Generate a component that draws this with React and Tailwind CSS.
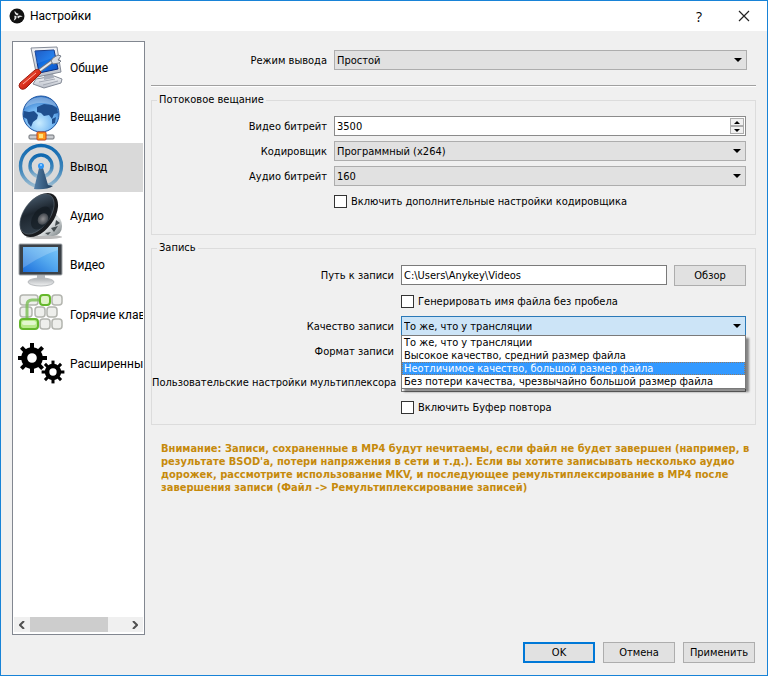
import React, { useState } from "react";

const GeneralIcon = () => (
  <svg viewBox="0 0 48 48" className="size-12 shrink-0" aria-hidden="true">
    <defs>
      <linearGradient id="pcScreen" x1="0" y1="0" x2="1" y2="1">
        <stop offset="0" stopColor="#0a3fae" />
        <stop offset="0.5" stopColor="#1372e6" />
        <stop offset="1" stopColor="#0a4fc4" />
      </linearGradient>
      <linearGradient id="pcCase" x1="0" y1="0" x2="0" y2="1">
        <stop offset="0" stopColor="#f4f5f8" />
        <stop offset="1" stopColor="#b9bec8" />
      </linearGradient>
      <linearGradient id="handle" x1="0" y1="0" x2="1" y2="1">
        <stop offset="0" stopColor="#ff8a70" />
        <stop offset="0.5" stopColor="#dc2f1c" />
        <stop offset="1" stopColor="#8e1208" />
      </linearGradient>
    </defs>
    <path d="M18 34l18-3 8 3-1 4-17 5-11-4z" fill="url(#pcCase)" stroke="#858b97" strokeLinejoin="round" />
    <path d="M21 37l16-3M25 40l15-4" stroke="#a4a9b4" fill="none" />
    <path d="M26 28h9l1 5-10 2z" fill="#aab0bc" />
    <path d="M13 3l26-1 4 25-24 5z" fill="url(#pcCase)" stroke="#858b97" strokeLinejoin="round" />
    <path d="M17 6l19-1 4 19-19 4z" fill="url(#pcScreen)" stroke="#0b2f80" />
    <path d="M17 6l19-1 1 7-19 7z" fill="#4f9df5" opacity="0.3" />
    <path d="M21 26L36 15" stroke="#6f7681" strokeWidth="4" />
    <path d="M21 26L36 15" stroke="#e6e9ee" strokeWidth="2" />
    <path d="M35 13l5-3 3 1-3 4 3 1-2 2-6 1-2-3z" fill="#d8dce3" stroke="#757c88" />
    <path d="M2 38L17 25q5-2 6 3L9 42q-4 4-7 1-2-2 0-5z" fill="url(#handle)" stroke="#9a1a0e" />
    <path d="M5 39L18 28" stroke="#ffb3a3" strokeWidth="1" />
  </svg>
);

const StreamIcon = () => (
  <svg viewBox="0 0 48 48" className="size-12 shrink-0" aria-hidden="true">
    <defs>
      <radialGradient id="globe" cx="0.45" cy="0.75" r="0.8">
        <stop offset="0" stopColor="#c9ecff" />
        <stop offset="0.5" stopColor="#73b6f2" />
        <stop offset="1" stopColor="#2266bd" />
      </radialGradient>
    </defs>
    <path d="M23 36v8" stroke="#70747a" strokeWidth="3" />
    <rect x="11" y="41" width="25" height="4" rx="1" fill="#c9cbcf" stroke="#6e7278" />
    <circle cx="23" cy="20" r="18" fill="url(#globe)" stroke="#2158a4" />
    <path d="M6 17l5 1 5-1 4 4-1 4-4 3-2 5-3-4-1-4-4-2z" fill="#1f4f8f" />
    <path d="M19 13l7-3 8 1 5 3 1 5-4 1-2 5-3-4-5 1-3-3-4-1z" fill="#1f4f8f" />
    <path d="M34 25l4-2-1 6-3 1z" fill="#1f4f8f" />
    <path d="M7 14Q9 4 23 3q13 1 16 10-8-4-16-4-9 0-16 5z" fill="#fff" opacity="0.3" />
    <rect x="19" y="38" width="9" height="8" rx="1" fill="#ff9c1b" stroke="#c5421a" />
    <rect x="21" y="40" width="4" height="4" fill="#ffe27a" />
  </svg>
);

const OutputIcon = () => (
  <svg viewBox="0 0 48 48" className="size-12 shrink-0" aria-hidden="true">
    <defs>
      <linearGradient id="wave" x1="0" y1="0" x2="0" y2="1">
        <stop offset="0" stopColor="#0f68b0" />
        <stop offset="0.6" stopColor="#3f86bb" />
        <stop offset="1" stopColor="#9cbdd2" />
      </linearGradient>
      <linearGradient id="mast" x1="0" y1="0" x2="1" y2="0">
        <stop offset="0" stopColor="#5480a8" />
        <stop offset="1" stopColor="#1f3c5c" />
      </linearGradient>
    </defs>
    <circle cx="23" cy="23" r="20.5" fill="none" stroke="url(#wave)" strokeWidth="3.4" />
    <circle cx="23" cy="23" r="11" fill="none" stroke="url(#wave)" strokeWidth="3.4" />
    <path d="M21 25h4l5 17 5 1q-6 4-19 3z" fill="url(#mast)" />
    <circle cx="23" cy="23" r="3" fill="#2f95f5" />
    <circle cx="23" cy="22" r="1" fill="#a4d6ff" />
  </svg>
);

const AudioIcon = () => (
  <svg viewBox="0 0 48 48" className="size-12 shrink-0" aria-hidden="true">
    <defs>
      <linearGradient id="cone" x1="0" y1="0" x2="0.8" y2="1">
        <stop offset="0" stopColor="#53687c" />
        <stop offset="0.5" stopColor="#1d262f" />
        <stop offset="1" stopColor="#34414d" />
      </linearGradient>
      <radialGradient id="cap">
        <stop offset="0" stopColor="#8f8f92" />
        <stop offset="1" stopColor="#43484e" />
      </radialGradient>
      <linearGradient id="magnet" x1="0" y1="0" x2="1" y2="1">
        <stop offset="0" stopColor="#6d757a" />
        <stop offset="0.5" stopColor="#e1e5e6" />
        <stop offset="1" stopColor="#70787b" />
      </linearGradient>
    </defs>
    <ellipse cx="26" cy="45" rx="18" ry="2" fill="#777" opacity="0.5" />
    <path d="M37 22q7 4 7 12 0 9-9 10H20z" fill="url(#magnet)" />
    <path d="M38 28l4 3-5 3zM33 36l7-2-4 6zM27 41l6-1-3 3z" fill="#434b4e" />
    <ellipse cx="21" cy="23" rx="15" ry="25" transform="rotate(36 21 23)" fill="#191b1e" />
    <ellipse cx="19" cy="22" rx="13" ry="23" transform="rotate(36 19 22)" fill="url(#cone)" stroke="#5d6974" strokeWidth="0.6" />
    <ellipse cx="23" cy="26" rx="8" ry="13" transform="rotate(36 23 26)" fill="#0f151b" opacity="0.55" />
    <ellipse cx="25" cy="27" rx="5" ry="6" transform="rotate(35 25 27)" fill="url(#cap)" />
  </svg>
);

const VideoIcon = () => (
  <svg viewBox="0 0 48 48" className="size-12 shrink-0" aria-hidden="true">
    <defs>
      <linearGradient id="tv" x1="0" y1="1" x2="1" y2="0">
        <stop offset="0" stopColor="#1d6fdc" />
        <stop offset="0.55" stopColor="#52a7ee" />
        <stop offset="1" stopColor="#7cc7f7" />
      </linearGradient>
      <linearGradient id="foot" x1="0" y1="0" x2="0" y2="1">
        <stop offset="0" stopColor="#aeb2b5" />
        <stop offset="1" stopColor="#f0f1f2" />
      </linearGradient>
    </defs>
    <rect x="19" y="32" width="8" height="6" fill="#b5b9bd" />
    <ellipse cx="23" cy="40" rx="13" ry="4" fill="url(#foot)" stroke="#b8bbbe" />
    <rect x="1" y="2" width="43" height="31" rx="1" fill="#3b4147" stroke="#a3a8ac" />
    <rect x="5" y="5" width="35" height="25" fill="url(#tv)" />
    <path d="M5 5h35v3Q22 14 5 26z" fill="#fff" opacity="0.2" />
  </svg>
);

const HotkeysIcon = () => {
  const keys = [
    [2, 4, 18],
    [34, 4, 10],
    [2, 16, 12],
    [17, 16, 10],
    [29, 16, 10],
    [22, 28, 10],
    [34, 28, 10],
  ];
  return (
    <svg viewBox="0 0 48 48" className="size-12 shrink-0" aria-hidden="true">
      {keys.map(([x, y, w]) => (
        <rect key={`${x}-${y}`} x={x} y={y} width={w} height="10" rx="3" fill="#eeefec" stroke="#b3b5af" strokeWidth="1.5" />
      ))}
      <path d="M9 29V14q0-5 5-5h9" fill="none" stroke="#79bd55" strokeWidth="3" opacity="0.8" />
      <rect x="22" y="4" width="10" height="10" rx="3" fill="#dff4c6" stroke="#65b82c" strokeWidth="2" />
      <rect x="2" y="28" width="18" height="10" rx="3" fill="#b9ea8a" stroke="#65b82c" strokeWidth="2" />
      <rect x="4" y="30" width="14" height="4" rx="2" fill="#e3f8ce" />
    </svg>
  );
};

const Gear = ({ x, y, scale }) => (
  <g transform={`translate(${x} ${y}) scale(${scale})`}>
    {[0, 45, 90, 135, 180, 225, 270, 315].map((angle) => (
      <rect key={angle} x="-2" y="-15" width="4" height="7" transform={`rotate(${angle})`} />
    ))}
    <circle r="7.8" fill="none" stroke="black" strokeWidth="6" />
  </g>
);

const AdvancedIcon = () => (
  <svg viewBox="0 0 48 48" className="size-12 shrink-0" aria-hidden="true">
    <Gear x={14} y={18} scale={1} />
    <Gear x={35} y={32} scale={0.76} />
  </svg>
);

const ObsLogo = () => (
  <svg viewBox="0 0 16 16" className="size-4" aria-hidden="true">
    <circle cx="8" cy="8" r="7.5" fill="#111" />
    {[0, 120, 240].map((angle) => (
      <g key={angle} transform={`rotate(${angle} 8 8)`}>
        <path d="M8.3 7.5Q5.2 6.6 5.6 2.8 7.2 5.5 9.6 5.8 9.2 6.8 8.3 7.5z" fill="#e4e4e4" />
      </g>
    ))}
  </svg>
);

const Arrow = ({ className }) => (
  <svg viewBox="0 0 8 4" className={`h-1 w-2 ${className}`} aria-hidden="true">
    <path d="M0 0h8L4 4z" fill="currentColor" />
  </svg>
);

const sections = [
  { name: "Общие", Icon: GeneralIcon },
  { name: "Вещание", Icon: StreamIcon },
  { name: "Вывод", Icon: OutputIcon },
  { name: "Аудио", Icon: AudioIcon },
  { name: "Видео", Icon: VideoIcon },
  { name: "Горячие клавиши", Icon: HotkeysIcon },
  { name: "Расширенные", Icon: AdvancedIcon },
];

const qualities = [
  "То же, что у трансляции",
  "Высокое качество, средний размер файла",
  "Неотличимое качество, большой размер файла",
  "Без потери качества, чрезвычайно большой размер файла",
];

const Select = ({ id, options, open = false }) => (
  <div className="relative">
    <select
      id={id}
      className={`block h-5 w-full appearance-none border px-[2px] outline-none ${
        open ? "border-[#2a79b8] bg-[#cce4f7]" : "border-[#adadad] bg-[#e1e1e1]"
      }`}
    >
      {options.map((option) => (
        <option key={option}>{option}</option>
      ))}
    </select>
    <Arrow className="pointer-events-none absolute top-2 right-[5px] text-black" />
  </div>
);

const Checkbox = ({ id, label }) => (
  <div className="col-start-2 flex h-5 items-center gap-1">
    <input
      id={id}
      type="checkbox"
      className="size-[13px] appearance-none border border-[#333] bg-white checked:bg-[#0078d7]"
    />
    <label htmlFor={id}>{label}</label>
  </div>
);

const Group = ({ title, className, children }) => (
  <fieldset className="mt-[5px] border border-[#dcdcdc] pr-[9px]">
    <legend className="ml-[5px] h-4 px-[2px] leading-4">{title}</legend>
    <div className={className}>{children}</div>
  </fieldset>
);

const DialogButton = ({ children, primary = false }) => (
  <button
    type="button"
    className={`h-[21px] w-[72px] bg-[#e1e1e1] ${
      primary ? "border-2 border-[#0078d7]" : "border border-[#adadad]"
    }`}
  >
    {children}
  </button>
);

const Sidebar = ({ active, onSelect }) => (
  <nav className="flex w-[133px] shrink-0 flex-col overflow-hidden border border-[#828790] bg-white p-px pb-[2px]">
    <ul className="mt-px grid h-[345px] grid-rows-7">
      {sections.map(({ name, Icon }) => (
        <li key={name} className="min-w-0">
          <button
            type="button"
            onClick={() => onSelect(name)}
            className={`flex h-full w-full items-center gap-1 overflow-hidden pl-1 text-left font-['Roboto',sans-serif] text-[12px] whitespace-nowrap ${
              active === name ? "bg-[#d9d9d9]" : ""
            }`}
          >
            <Icon />
            <span>{name}</span>
          </button>
        </li>
      ))}
    </ul>
    <div className="mt-auto flex h-[15px] bg-[#f0f0f0]">
      <button type="button" aria-label="Влево" className="flex w-4 items-center justify-center">
        <svg viewBox="0 0 6 8" className="h-2 w-[6px]">
          <path d="M5 0L1 4l4 4" fill="none" stroke="#505050" strokeWidth="2" />
        </svg>
      </button>
      <div className="flex-1">
        <div className="h-full w-4/5 bg-[#cdcdcd]" />
      </div>
      <button type="button" aria-label="Вправо" className="flex w-4 items-center justify-center">
        <svg viewBox="0 0 6 8" className="h-2 w-[6px]">
          <path d="M1 0l4 4-4 4" fill="none" stroke="#505050" strokeWidth="2" />
        </svg>
      </button>
    </div>
  </nav>
);

const App = () => {
  const [active, setActive] = useState("Вывод");
  const [highlighted, setHighlighted] = useState(2);

  return (
    <div className="flex min-h-screen flex-col border border-[#1883d7] bg-[#f0f0f0] font-['DejaVu_Sans_Condensed','DejaVu_Sans',sans-serif] text-[11px] leading-[13px] text-black">
      <header className="flex h-[30px] items-center bg-white pr-[17px] pl-2">
        <ObsLogo />
        <h1 className="ml-[5px] font-['Roboto',sans-serif] text-[12px]">Настройки</h1>
        <button type="button" aria-label="Справка" className="mr-9 ml-auto font-['Open_Sans',sans-serif] text-[14px]">
          ?
        </button>
        <button type="button" aria-label="Закрыть">
          <svg viewBox="0 0 12 12" className="size-3">
            <path d="M1 1l10 10M11 1L1 11" stroke="#222" strokeWidth="1.2" />
          </svg>
        </button>
      </header>

      <div className="flex flex-1 gap-[6px] px-[11px] pt-[10px]">
        <Sidebar active={active} onSelect={setActive} />

        <main className="min-w-0 flex-1 pt-[9px]">
          <div className="grid grid-cols-[176px_1fr] items-center gap-x-[7px] pr-[9px]">
            <label htmlFor="mode" className="text-right">Режим вывода</label>
            <Select id="mode" options={["Простой", "Расширенный"]} />
          </div>
          <hr className="mt-[15px] h-[2px] border-t border-[#a0a0a0] bg-white" />

          <Group
            title="Потоковое вещание"
            className="grid grid-cols-[175px_1fr] items-center gap-x-[7px] gap-y-[5px] pt-2 pb-[23px]"
          >
            <label htmlFor="video-bitrate" className="text-right">Видео битрейт</label>
            <div className="flex h-5 border border-[#8b8b8b] bg-white">
              <input
                id="video-bitrate"
                type="text"
                defaultValue="3500"
                className="min-w-0 flex-1 px-[2px] outline-none"
              />
              <div className="my-px mr-px flex w-[14px] flex-col">
                <button type="button" aria-label="Увеличить" className="flex flex-1 items-center justify-center border border-[#adadad] bg-[#f0f0f0]">
                  <svg viewBox="0 0 6 3" className="h-[3px] w-[6px]"><path d="M0 3h6L3 0z" /></svg>
                </button>
                <button type="button" aria-label="Уменьшить" className="flex flex-1 items-center justify-center border border-[#adadad] bg-[#f0f0f0]">
                  <svg viewBox="0 0 6 3" className="h-[3px] w-[6px]"><path d="M0 0h6L3 3z" /></svg>
                </button>
              </div>
            </div>
            <label htmlFor="encoder" className="text-right">Кодировщик</label>
            <Select id="encoder" options={["Программный (x264)"]} />
            <label htmlFor="audio-bitrate" className="text-right">Аудио битрейт</label>
            <Select id="audio-bitrate" options={["160", "192", "320"]} />
            <Checkbox id="encoder-extra" label="Включить дополнительные настройки кодировщика" />
          </Group>

          <Group
            title="Запись"
            className="grid grid-cols-[242px_1fr] items-center gap-x-[7px] gap-y-[5px] pt-[9px] pb-[7px]"
          >
            <label htmlFor="path" className="text-right">Путь к записи</label>
            <div className="flex gap-[7px]">
              <input
                id="path"
                type="text"
                defaultValue="C:\Users\Anykey\Videos"
                className="h-5 min-w-0 flex-1 border border-[#7a7a7a] bg-white px-[2px] outline-none"
              />
              <DialogButton>Обзор</DialogButton>
            </div>
            <Checkbox id="no-space" label="Генерировать имя файла без пробела" />
            <label htmlFor="quality" className="text-right">Качество записи</label>
            <div className="relative">
              <Select id="quality" options={qualities} open />
              <ul
                role="listbox"
                aria-label="Качество записи"
                className="absolute top-[19px] z-10 w-full border border-[#7a7a7a] bg-white shadow-[3px_3px_2px_rgba(0,0,0,0.45)]"
              >
                {qualities.map((quality, index) => (
                  <li
                    key={quality}
                    role="option"
                    aria-selected={index === highlighted}
                    onMouseEnter={() => setHighlighted(index)}
                    className={`h-[13px] px-[2px] whitespace-nowrap ${
                      index === highlighted
                        ? "bg-[#3399ff] text-white outline-1 -outline-offset-1 outline-dotted outline-[#cc6600]/60"
                        : ""
                    }`}
                  >
                    {quality}
                  </li>
                ))}
              </ul>
            </div>
            <label htmlFor="format" className="text-right">Формат записи</label>
            <Select id="format" options={["flv", "mp4", "mkv"]} />
            <label htmlFor="muxer" className="pt-[6px] text-right whitespace-nowrap">
              Пользовательские настройки мультиплексора
            </label>
            <div className="pt-[6px]">
              <input
                id="muxer"
                type="text"
                className="block h-5 w-full border border-[#7a7a7a] bg-white px-[2px] outline-none"
              />
            </div>
            <Checkbox id="replay-buffer" label="Включить Буфер повтора" />
          </Group>

          <p className="mt-[17px] pl-[10px] font-bold text-[#c68a0c]">
            Внимание: Записи, сохраненные в MP4 будут нечитаемы, если файл не будет завершен (например, в
            результате BSOD'a, потери напряжения в сети и т.д.). Если вы хотите записывать несколько аудио
            дорожек, рассмотрите использование MKV, и последующее ремультиплексирование в MP4 после
            завершения записи (Файл -&gt; Ремультиплексирование записей)
          </p>
        </main>
      </div>

      <footer className="flex justify-end gap-2 px-3 pt-[7px] pb-3">
        <DialogButton primary>OK</DialogButton>
        <DialogButton>Отмена</DialogButton>
        <DialogButton>Применить</DialogButton>
      </footer>
    </div>
  );
};

export default App;
